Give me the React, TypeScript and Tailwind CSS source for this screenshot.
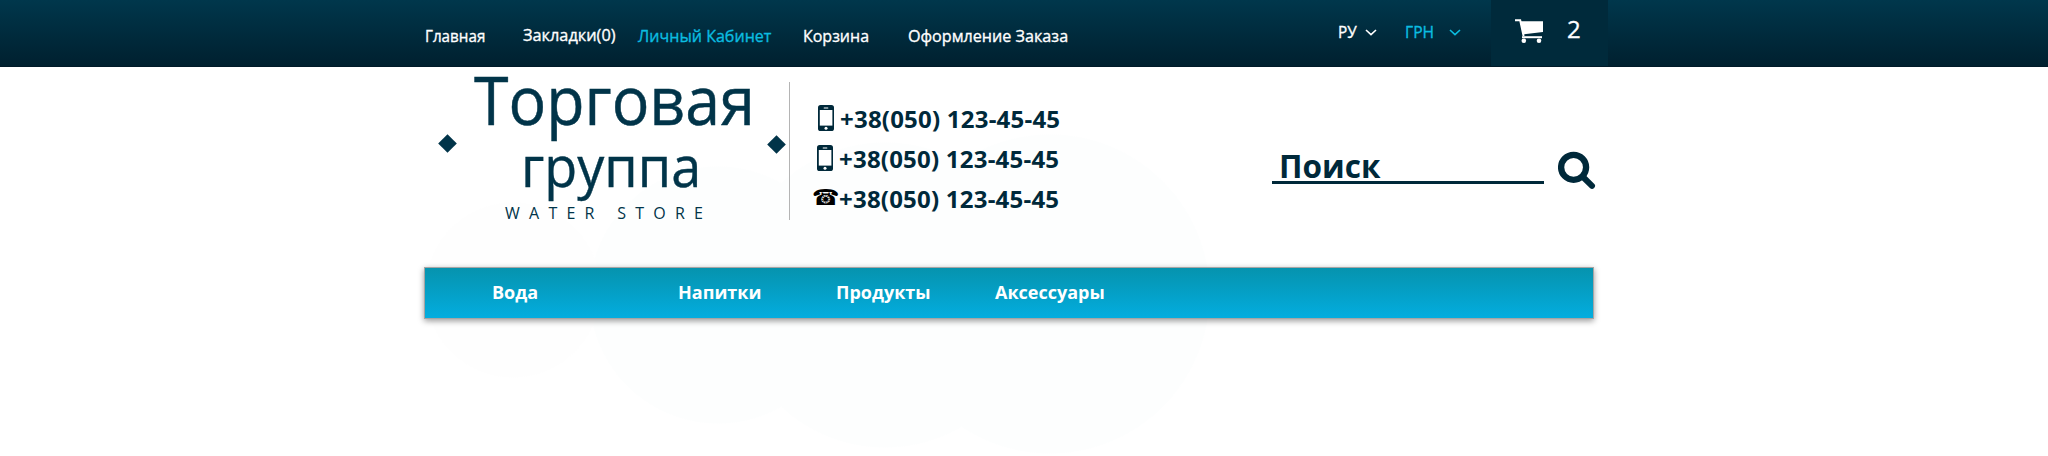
const NAV = [
  { label: 'Главная', cell: 'w-[98px] pt-[24px]', text: 'scale-x-[0.895]' },
  { label: 'Закладки(0)', cell: 'w-[115px] pt-[23px]', text: 'scale-x-[0.96]' },
  { label: 'Личный Кабинет', cell: 'w-[165px] pt-[24px] text-[#0bbde0]', text: 'scale-x-[0.945]' },
  { label: 'Корзина', cell: 'w-[105px] pt-[24px]', text: 'scale-x-[0.94]' },
  { label: 'Оформление Заказа', cell: 'w-[430px] pt-[24px]', text: 'scale-x-[0.95]' },
];

const MENU = [
  { label: 'Вода', cell: 'w-[186px]' },
  { label: 'Напитки', cell: 'w-[158px]' },
  { label: 'Продукты', cell: 'w-[159px]' },
  { label: 'Аксессуары', cell: 'w-[160px]' },
];

function Chevron() {
  return (
    <svg className="h-[7px] w-[12px]" viewBox="0 0 12 7" fill="none" stroke="currentColor" strokeWidth="1.6">
      <path d="M1 1l5 4.6L11 1" />
    </svg>
  );
}

function Mobile() {
  return (
    <svg className="h-[26px] w-[16px] shrink-0" viewBox="0 0 16 26">
      <rect width="16" height="26" rx="2.6" fill="#00293a" />
      <rect x="1.8" y="5" width="12.6" height="15.6" fill="#fff" />
      <rect x="5.6" y="2.6" width="4.8" height="0.9" rx="0.4" fill="#fff" />
      <circle cx="8" cy="23.2" r="1.5" fill="#fff" />
    </svg>
  );
}

function Diamond() {
  return (
    <svg className="h-[19px] w-[19px] shrink-0" viewBox="0 0 19 19">
      <path d="M9.5 0.2L18.8 9.5L9.5 18.8L0.2 9.5Z" fill="#013449" />
    </svg>
  );
}

export default function App() {
  return (
    <div className="h-[456px] w-[2048px] overflow-hidden bg-white bg-[radial-gradient(circle_at_513px_290px,#fefefe_87px,transparent_88px),radial-gradient(circle_at_718px_295px,#fdfefe_128px,transparent_129px),radial-gradient(circle_at_885px_295px,#fdfefe_152px,transparent_153px),radial-gradient(circle_at_1050px_294px,#fdfefe_159px,transparent_160px)] font-['Open_Sans','Noto_Sans',sans-serif]">
      <header className="flex h-[67px] border-b border-[#001a28] bg-linear-to-b from-[#00374c] to-[#00202f] pl-[425px] text-white">
        <nav className="flex text-[17px] leading-[24px] [-webkit-text-stroke:0.35px_currentColor]">
          {NAV.map((n) => (
            <a key={n.label} className={n.cell}>
              <span className={`inline-block origin-left whitespace-nowrap ${n.text}`}>{n.label}</span>
            </a>
          ))}
        </nav>
        <div className="flex w-[153px] pt-[20px] text-[17px] leading-[24px] [-webkit-text-stroke:0.35px_currentColor]">
          <div className="flex w-[67px]">
            <span className="w-[27px] origin-left scale-x-[0.9]">РУ</span>
            <span className="pt-[9px]"><Chevron /></span>
          </div>
          <div className="flex text-[#0bbde0]">
            <span className="w-[44px] origin-left scale-x-[0.92]">ГРН</span>
            <span className="pt-[9px]"><Chevron /></span>
          </div>
        </div>
        <div className="flex h-[66px] w-[117px] bg-[#002a3b] pl-[24px]">
          <svg className="mt-[19px] h-[25px] w-[29px]" viewBox="0 0 29 25" fill="none">
            <path d="M5 2.2H28V13L8 15.4Z" fill="#fff" />
            <path d="M0 1.2H5.2L8.6 17" stroke="#fff" strokeWidth="2" />
            <path d="M7 18.2H27" stroke="#fff" strokeWidth="2" />
            <circle cx="8.8" cy="21.8" r="2.3" fill="#fff" />
            <circle cx="24" cy="21.8" r="2.3" fill="#fff" />
          </svg>
          <span className="pt-[13px] pl-[23px] text-[24px] leading-[32px] [-webkit-text-stroke:0.3px_currentColor]">2</span>
        </div>
      </header>

      <div className="flex h-[200px] pl-[438px] text-[#00293a]">
        <div className="pt-[67px]"><Diamond /></div>
        <div className="flex w-[310px] flex-col text-[#013449]">
          <div className="h-[68px] pl-[17px] text-[68px] leading-[64px] [-webkit-text-stroke:0.5px_currentColor]">
            <span className="inline-block origin-left scale-x-[0.922] whitespace-nowrap">Торговая</span>
          </div>
          <div className="h-[67px] pl-[64px] text-[56px] leading-[60px] [-webkit-text-stroke:0.4px_currentColor]">
            <span className="inline-block origin-left scale-x-[0.964] whitespace-nowrap">группа</span>
          </div>
          <div className="pl-[48px] text-[16px] leading-[22px] tracking-[9.25px] whitespace-nowrap">WATER STORE</div>
        </div>
        <div className="pt-[68px]"><Diamond /></div>
        <div className="mt-[15px] ml-[3px] h-[138px] w-px bg-[#b4b4b4]" />
        <div className="flex w-[482px] flex-col pt-[32px] pl-[22px] text-[24px] leading-[40px] font-bold tracking-[0.22px]">
          <div className="flex h-[40px] pl-[6px]">
            <span className="w-[22px] pt-[6px]"><Mobile /></span>
            <span>+38(050) 123-45-45</span>
          </div>
          <div className="flex h-[40px] pl-[5px]">
            <span className="w-[22px] pt-[6px]"><Mobile /></span>
            <span>+38(050) 123-45-45</span>
          </div>
          <div className="flex h-[40px]">
            <span className="w-[27px] font-['DejaVu_Sans'] text-[22px] leading-[38px] font-normal text-black">☎</span>
            <span>+38(050) 123-45-45</span>
          </div>
        </div>
        <div className="mt-[80px] h-[37px] w-[272px] border-b-[3px] border-[#00293a] pl-[7px] text-[32px] leading-[38px] font-bold">
          <span className="inline-block origin-left scale-x-[0.985]">Поиск</span>
        </div>
        <svg className="mt-[84px] ml-[14px] h-[39px] w-[39px]" viewBox="0 0 39 39" fill="none" stroke="#00293a">
          <circle cx="15.6" cy="16.3" r="12.5" strokeWidth="6.3" />
          <path d="M25 26L34 34.8" strokeWidth="6" strokeLinecap="round" />
        </svg>
      </div>

      <nav className="ml-[424px] flex h-[52px] w-[1170px] border border-[#a5a5a5] bg-linear-to-b from-[#0693ae] to-[#03addf] pl-[67px] text-[18px] leading-[48px] font-bold text-white shadow-[0_2px_6px_rgba(0,0,0,0.4)]">
        {MENU.map((m) => (
          <a key={m.label} className={m.cell}>{m.label}</a>
        ))}
      </nav>
    </div>
  );
}
